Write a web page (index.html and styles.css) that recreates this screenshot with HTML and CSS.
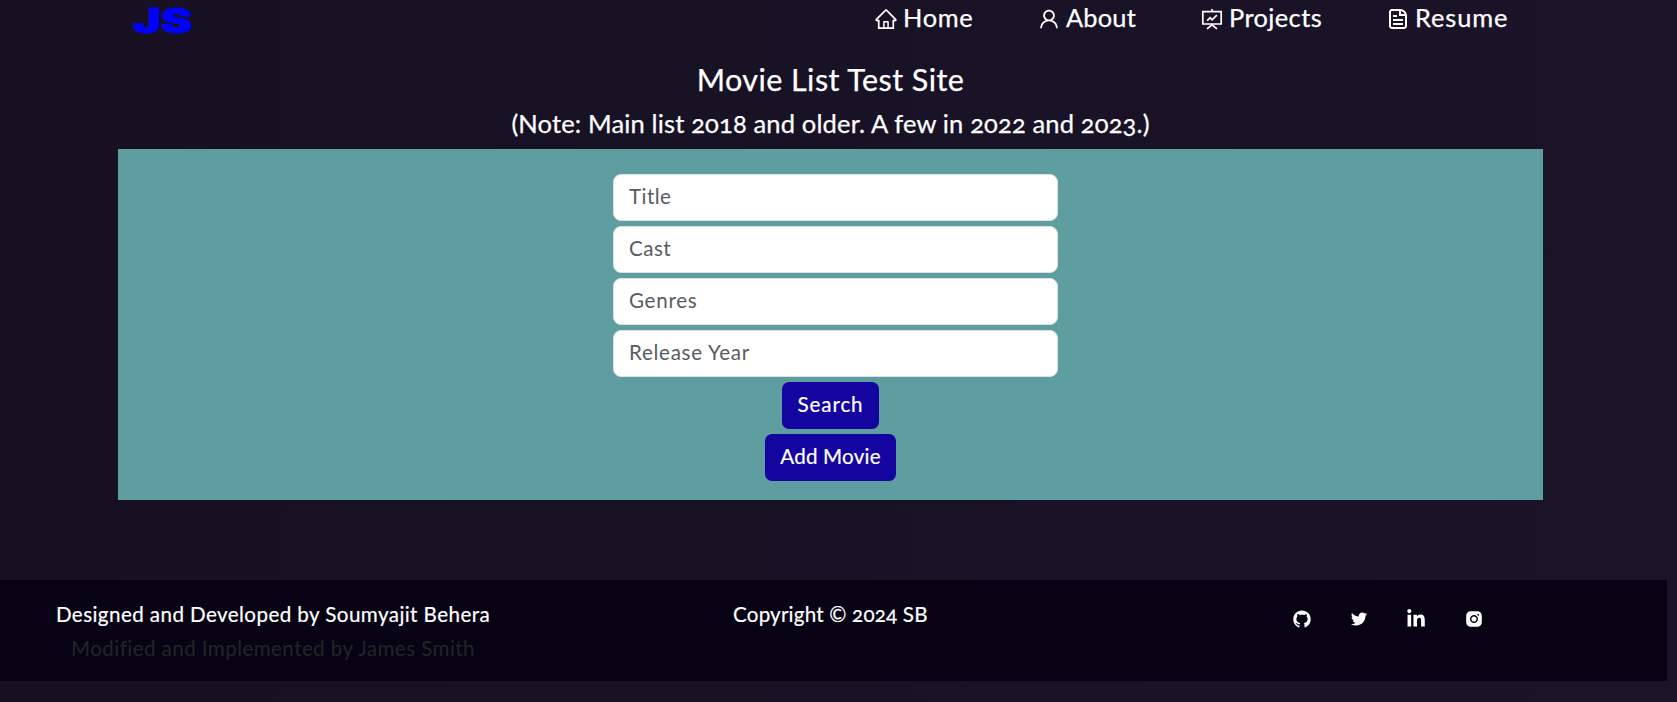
FILE: index.html
```
<!DOCTYPE html>
<html lang="en">
<head>
<meta charset="utf-8">
<title>Movie List Test Site</title>
<link rel="stylesheet" href="styles.css">
</head>
<body>
<header class="navbar">
  <a class="brand"><span class="brand-text">JS</span></a>
  <nav class="nav">
    <a class="nav-link home"><svg class="icon" viewBox="0 0 1024 1024"><path d="M946.5 505L560.1 118.8l-25.9-25.9a31.5 31.5 0 0 0-44.4 0L77.5 505a63.9 63.9 0 0 0-18.8 46c.4 35.2 29.7 63.3 64.9 63.3h42.5V940h691.8V614.3h43.4c17.1 0 33.2-6.7 45.3-18.8a63.6 63.6 0 0 0 18.7-45.3c0-17-6.7-33.1-18.8-45.2zM568 868H456V664h112v204zm217.9-325.7V868H632V640c0-22.1-17.9-40-40-40H432c-22.1 0-40 17.9-40 40v228H238.1V542.3h-96l370-369.7 23.1 23.1L882 542.3h-96.1z"/></svg><span>Home</span></a>
    <a class="nav-link about"><svg class="icon" viewBox="0 0 1024 1024"><path d="M858.5 763.6a374 374 0 0 0-80.6-119.5 375.63 375.63 0 0 0-119.5-80.6c-.4-.2-.8-.3-1.2-.5C719.5 518 760 444.7 760 362c0-137-111-248-248-248S264 225 264 362c0 82.7 40.5 156 102.8 201.1-.4.2-.8.3-1.2.5-44.8 18.9-85 46-119.5 80.6a375.63 375.63 0 0 0-80.6 119.5A371.7 371.7 0 0 0 136 901.8a8 8 0 0 0 8 8.2h60c4.4 0 7.9-3.5 8-7.8 2-77.2 33-149.5 87.8-204.3 56.7-56.7 132-87.9 212.2-87.9s155.5 31.2 212.2 87.9C779 752.7 810 825 812 902.2c.1 4.4 3.6 7.8 8 7.8h60a8 8 0 0 0 8-8.2c-1-47.8-10.9-94.3-29.5-138.2zM512 534c-45.9 0-89.1-17.9-121.6-50.4S340 407.9 340 362c0-45.9 17.9-89.1 50.4-121.6S466.1 190 512 190s89.1 17.9 121.6 50.4S684 316.1 684 362c0 45.9-17.9 89.1-50.4 121.6S557.9 534 512 534z"/></svg><span>About</span></a>
    <a class="nav-link projects"><svg class="icon line" viewBox="0 0 1024 1024"><path d="M120 196H904V724H120ZM512 90V196M300 935L512 765L724 935M306 585L430 461L516 547L720 343"/></svg><span>Projects</span></a>
    <a class="nav-link resume"><svg class="icon" viewBox="0 0 24 24"><path d="M7 18H17V16H7V18ZM17 14H7V12H17V14ZM7 10H11V8H7V10Z"/><path fill-rule="evenodd" d="M6 2C4.34315 2 3 3.34315 3 5V19C3 20.6569 4.34315 22 6 22H18C19.6569 22 21 20.6569 21 19V9C21 5.13401 17.866 2 14 2H6ZM6 4H13V9H19V19C19 19.5523 18.5523 20 18 20H6C5.44772 20 5 19.5523 5 19V5C5 4.44772 5.44772 4 6 4ZM15 4.10002C16.6113 4.4271 17.9413 5.52906 18.584 7H15V4.10002Z"/></svg><span>Resume</span></a>
  </nav>
</header>
<main class="container">
  <h1 class="title">Movie List Test Site</h1>
  <h2 class="note">(Note: Main list 2018 and older. A few in 2022 and 2023.)</h2>
  <form class="search">
    <input class="field short" placeholder="Title">
    <input class="field short" placeholder="Cast">
    <input class="field" placeholder="Genres">
    <input class="field" placeholder="Release Year">
    <button class="btn wide" type="button">Search</button>
    <button class="btn" type="button">Add Movie</button>
  </form>
</main>
<footer class="footer">
  <div class="credits"><div>Designed and Developed by Soumyajit Behera</div><div class="modified">Modified and Implemented by James Smith</div></div>
  <div class="copyright">Copyright © 2024 SB</div>
  <div class="social">
    <svg class="social-icon" viewBox="0 0 1024 1024"><path d="M511.6 76.3C264.3 76.2 64 276.4 64 523.5 64 718.9 189.3 885 363.8 946c23.5 5.9 19.9-10.8 19.9-22.2v-77.5c-135.7 15.9-141.2-73.9-150.3-88.9C215 726 171.5 718 184.5 703c30.9-15.9 62.4 4 98.9 57.9 26.4 39.1 77.9 32.5 104 26 5.7-23.5 17.9-44.5 34.7-60.8-140.6-25.2-199.2-111-199.2-213 0-49.5 16.3-95 48.3-131.7-20.4-60.5 1.9-112.3 4.9-120 58.1-5.2 118.5 41.6 123.2 45.3 33-8.9 70.7-13.6 112.9-13.6 42.4 0 80.2 4.9 113.5 13.9 11.3-8.6 67.3-48.8 121.3-43.9 2.9 7.7 24.7 58.3 5.5 118 32.4 36.8 48.9 82.7 48.9 132.3 0 102.2-59 188.1-200 212.9a127.5 127.5 0 0 1 38.1 91v112.5c.8 9 0 17.9 15 17.9 177.1-59.7 304.6-227 304.6-424.1 0-247.2-200.4-447.3-447.5-447.3z"/></svg>
    <svg class="social-icon" viewBox="0 0 1024 1024"><path d="M928 254.3c-30.6 13.2-63.9 22.7-98.2 26.4a170.1 170.1 0 0 0 75-94 336.64 336.64 0 0 1-108.2 41.2A170.1 170.1 0 0 0 672 174c-94.5 0-170.5 76.6-170.5 170.6 0 13.2 1.6 26.4 4.2 39.1-141.5-7.4-267.7-75-351.6-178.5a169.32 169.32 0 0 0-23.2 86.1c0 59.2 30.1 111.4 76 142.1a172 172 0 0 1-77.1-21.7v2.1c0 82.9 58.6 151.6 136.7 167.4a180.6 180.6 0 0 1-44.9 5.8c-11.1 0-21.6-1.1-32.2-2.6C211 652 273.9 701.1 348.8 702.7c-58.6 45.9-132 72.9-211.7 72.9-14.3 0-27.5-.5-41.2-2.1C171.5 822 261.2 850 357.8 850 671.4 850 843 590.2 843 364.7c0-7.4 0-14.8-.5-22.2 33.2-24.3 62.3-54.4 85.5-88.2z"/></svg>
    <svg class="social-icon" viewBox="0 0 448 512"><path d="M100.28 448H7.4V148.9h92.88zM53.79 108.1C24.09 108.1 0 83.5 0 53.8a53.79 53.79 0 0 1 107.58 0c0 29.7-24.1 54.3-53.79 54.3zM447.9 448h-92.68V302.4c0-34.7-.7-79.2-48.29-79.2-48.29 0-55.69 37.7-55.69 76.7V448h-92.78V148.9h89.08v40.8h1.3c12.4-23.5 42.69-48.3 87.88-48.3 94 0 111.28 61.9 111.28 142.3V448z"/></svg>
    <svg class="social-icon" viewBox="0 0 1024 1024"><path d="M512 378.7c-73.4 0-133.3 59.9-133.3 133.3S438.6 645.3 512 645.3 645.3 585.4 645.3 512 585.4 378.7 512 378.7zM911.8 512c0-55.2.5-109.9-2.6-165-3.1-64-17.7-120.8-64.5-167.6-46.9-46.9-103.6-61.4-167.6-64.5-55.2-3.1-109.9-2.6-165-2.6-55.2 0-109.9-.5-165 2.6-64 3.1-120.8 17.7-167.6 64.5C132.6 226.3 118.1 283 115 347c-3.1 55.2-2.6 109.9-2.6 165s-.5 109.9 2.6 165c3.1 64 17.7 120.8 64.5 167.6 46.9 46.9 103.6 61.4 167.6 64.5 55.2 3.1 109.9 2.6 165 2.6 55.2 0 109.9.5 165-2.6 64-3.1 120.8-17.7 167.6-64.5 46.9-46.9 61.4-103.6 64.5-167.6 3.2-55.1 2.6-109.8 2.6-165zM512 717.1c-113.5 0-205.1-91.6-205.1-205.1S398.5 306.9 512 306.9 717.1 398.5 717.1 512 625.5 717.1 512 717.1zm213.5-370.7c-26.5 0-47.9-21.4-47.9-47.9s21.4-47.9 47.9-47.9 47.9 21.4 47.9 47.9a47.84 47.84 0 0 1-47.9 47.9z"/></svg>
  </div>
</footer>
</body>
</html>
```
FILE: styles.css
```
* { box-sizing: border-box; }
body {
  margin: 0;
  height: 702px;
  overflow: hidden;
  background: linear-gradient(to right, #161022, #1b1429);
  color: #fff;
  font-family: Lato, "Liberation Sans", sans-serif;
  font-size: 20.6px;
  font-feature-settings: "onum";
}
.navbar {
  display: flex;
  justify-content: space-between;
  height: 61px;
  padding: 0 167px 0 133px;
}
.brand { color: #0000ff; height: 40px; }
.brand-text {
  display: block;
  font: 900 34px/41px Inter, sans-serif;
  transform: scaleX(1.38);
  transform-origin: left;
  -webkit-text-stroke: .8px #0000ff;
}
.nav { display: flex; height: 33px; }
.nav-link {
  display: flex;
  font-size: 25.4px;
  line-height: 34px;
  white-space: nowrap;
  -webkit-text-stroke: .25px #fff;
}
.nav-link span { margin-left: 5px; }
.nav-link svg { -webkit-text-stroke: 0; }
.home { width: 163px; letter-spacing: .7px; }
.about { width: 163px; letter-spacing: .2px; }
.projects { width: 186px; letter-spacing: .4px; }
.resume { width: 124px; letter-spacing: .9px; }
.icon { width: 24px; height: 24px; margin-top: 7px; fill: currentColor; flex: none; }
.line { fill: none; stroke: currentColor; stroke-width: 72; }
.container { width: 1425px; margin-left: 118px; text-align: center; }
.title {
  margin: 0;
  font-size: 30.5px;
  font-weight: 400;
  line-height: 36px;
  letter-spacing: .45px;
  -webkit-text-stroke: .25px #fff;
}
.note {
  margin: 11px 0;
  font-size: 25.5px;
  font-weight: 400;
  line-height: 30px;
  letter-spacing: .15px;
  -webkit-text-stroke: .25px #fff;
}
.search {
  display: flex;
  flex-direction: column;
  align-items: center;
  gap: 5px;
  height: 351px;
  padding-top: 25px;
  background: #5f9ea0;
}
.field {
  width: 445px;
  height: 47px;
  margin-left: 10px;
  padding: 0 15px 3px;
  border: 1px solid #dee2e6;
  border-radius: 8px;
  background: #fff;
  font: inherit;
  letter-spacing: .7px;
}
.field.short { letter-spacing: .45px; }
.field::placeholder { color: #595c5f; opacity: 1; }
.btn {
  width: 131px;
  height: 47px;
  padding: 0 0 3px;
  border: 0;
  border-radius: 7px;
  background: #1405a0;
  color: #fff;
  font: inherit;
  letter-spacing: .2px;
  -webkit-text-stroke: .2px #fff;
}
.btn.wide { width: 97px; letter-spacing: .9px; }
.footer {
  display: grid;
  grid-template-columns: 546px 556px 1fr;
  width: 1667px;
  height: 101px;
  margin-top: 80px;
  padding-top: 19px;
  background: #080314;
  line-height: 30px;
}
.credits { text-align: center; letter-spacing: .42px; -webkit-text-stroke: .2px; }
.modified { margin-top: 4px; color: #212529; -webkit-text-stroke: 0; }
.copyright { padding-left: 187px; letter-spacing: .2px; -webkit-text-stroke: .2px; }
.social { display: flex; gap: 37.2px; padding: 10px 0 0 190px; }
.social-icon { width: 20px; height: 20px; fill: #fff; }
```
